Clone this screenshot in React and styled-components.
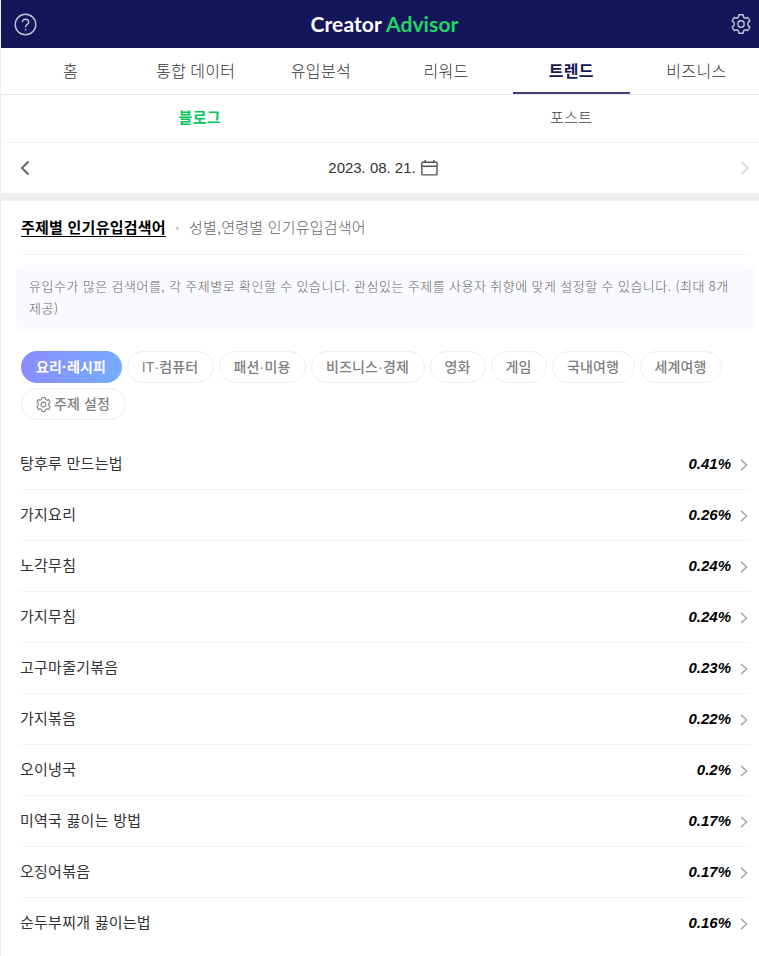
import React, { useState } from 'react';
import styled, { createGlobalStyle, css } from 'styled-components';

const GlobalStyle = createGlobalStyle`
  * {
    box-sizing: border-box;
  }
  body {
    margin: 0;
    background-color: #fff;
    font-family: 'Liberation Sans', 'Noto Sans CJK KR', sans-serif;
    color: #333;
  }
  button {
    padding: 0;
    border: 0;
    background: none;
    font: inherit;
    color: inherit;
    cursor: pointer;
  }
  svg {
    display: block;
    flex-shrink: 0;
  }
`;

const Page = styled.div`
  height: 956px;
  border-left: 1px solid #eee;
  overflow: hidden;
`;

const Header = styled.header`
  display: flex;
  justify-content: space-between;
  align-items: center;
  height: 48px;
  padding: 0 8px 0 13px;
  background-color: #15155b;
  color: #c4c4d6;
`;

const Logo = styled.h1`
  display: flex;
  gap: 4px;
  margin: 0 0 1px 1px;
  font-family: Lato, sans-serif;
  font-size: 21px;
  font-weight: 700;
  line-height: 24px;
  letter-spacing: 0.1px;
  color: #fff;
`;

const LogoAccent = styled.span`
  color: #20d665;
`;

const MainTabs = styled.nav`
  display: grid;
  grid-template-columns: repeat(6, 1fr);
  height: 47px;
  padding-left: 7px;
  border-bottom: 1px solid #e6e6e6;
  font-family: 'Noto Sans CJK KR', sans-serif;
`;

const MainTab = styled.button`
  margin: 0 4px;
  border-bottom: 2px solid transparent;
  font-size: 16px;
  font-weight: 300;
  line-height: 42px;
  letter-spacing: 0.35px;
  ${({ $active }) =>
    $active &&
    css`
      border-color: #42427c;
      font-weight: 700;
      color: #15155b;
    `}
`;

const SubTabs = styled.nav`
  display: grid;
  grid-template-columns: 1fr 1fr;
  height: 48px;
  padding: 0 2px 0 13px;
  border-bottom: 1px solid #f4f4f4;
`;

const SubTab = styled.button`
  padding-bottom: 2px;
  font-size: 15px;
  font-weight: ${({ $active }) => ($active ? 700 : 300)};
  line-height: 44px;
  letter-spacing: 0.4px;
  color: ${({ $active }) => ($active ? '#03c75a' : '#444')};
`;

const DateBar = styled.div`
  display: flex;
  justify-content: space-between;
  align-items: center;
  height: 50px;
  padding: 0 9px 0 19px;
`;

const DateLabel = styled.button`
  display: flex;
  align-items: center;
  gap: 5px;
  margin-left: -4px;
  font-size: 15px;
  line-height: 20px;
  letter-spacing: -0.02px;
`;

const Divider = styled.div`
  height: 8px;
  background-color: #eee;
`;

const SectionTabs = styled.div`
  display: flex;
  align-items: center;
  height: 54px;
  margin: 0 9px 0 20px;
  border-bottom: 1px solid #f4f4f4;
`;

const SectionTab = styled.button`
  height: 17px;
  margin-top: 1px;
  border-bottom: 1px solid ${({ $active }) => ($active ? '#000' : 'transparent')};
  font-size: 15px;
  font-weight: ${({ $active }) => ($active ? 700 : 300)};
  line-height: 16px;
  letter-spacing: ${({ $active }) => ($active ? 0.25 : 0.2)}px;
  color: ${({ $active }) => ($active ? '#000' : '#666')};
`;

const Dot = styled.span`
  width: 3px;
  height: 3px;
  margin: 1px 10px 0;
  background-color: #d2d2d2;
`;

const Notice = styled.p`
  height: 66px;
  margin: 10px 5px 0 15px;
  padding: 10px 13px;
  border-radius: 6px;
  background-color: #f9faff;
  font-family: 'Noto Sans CJK KR', sans-serif;
  font-size: 13px;
  font-weight: 300;
  line-height: 22px;
  letter-spacing: 0.5px;
  word-spacing: 0.5px;
  color: #666;
`;

const Chips = styled.div`
  display: flex;
  flex-wrap: wrap;
  gap: 5px;
  padding: 20px 20px 0;
`;

const Chip = styled.button`
  display: flex;
  justify-content: center;
  align-items: center;
  gap: 3px;
  width: ${({ $width }) => $width}px;
  height: 32px;
  padding-right: 1px;
  border: 1px solid #eee;
  border-radius: 16px;
  font-size: 14px;
  font-weight: 500;
  line-height: 20px;
  letter-spacing: 0.15px;
  white-space: nowrap;
  color: #808080;
  ${({ $active }) =>
    $active &&
    css`
      border: 0;
      background-image: linear-gradient(105deg, #8b8bff, #75adff);
      font-weight: 700;
      color: #fff;
    `}
`;

const KeywordList = styled.ul`
  margin: 19px 9px 0 19px;
  padding: 0;
  list-style: none;
`;

const KeywordRow = styled.li`
  display: flex;
  align-items: center;
  height: 51px;
  border-bottom: 1px solid #f4f4f4;

  &:last-child {
    border-bottom-color: transparent;
  }
`;

const Keyword = styled.span`
  flex: 1;
  font-size: 15px;
  font-weight: 400;
  line-height: 20px;
  letter-spacing: 0.25px;
`;

const Ratio = styled.em`
  margin-right: 9px;
  font-size: 15px;
  font-weight: 700;
  line-height: 20px;
  color: #000;
`;

const HelpIcon = () => (
  <svg width="23" height="23" viewBox="0 0 23 23" fill="none" stroke="currentColor" strokeWidth="1.4">
    <circle cx="11.5" cy="11.5" r="10.3" />
    <path d="M8.4 9.3C8.4 7.4 9.7 6.3 11.5 6.3s3.2 1.1 3.2 2.8c0 2.2-3.1 2.4-3.1 4.8v.4" />
    <path d="M11.6 15.8v1.5" />
  </svg>
);

const GearIcon = ({ size = 20 }) => (
  <svg
    width={size}
    height={size}
    viewBox="0 0 20 20"
    fill="none"
    stroke="currentColor"
    strokeWidth="1.4"
    strokeLinejoin="round"
  >
    <path d="M8 .8h4l.7 2.5 1.5.9 2.6-.7 2 3.4-1.9 1.9v2.4l1.9 1.9-2 3.4-2.6-.7-1.5.9-.7 2.5H8l-.7-2.5-1.5-.9-2.6.7-2-3.4 1.9-1.9V8.8L1.2 6.9l2-3.4 2.6.7 1.5-.9z" />
    <circle cx="10" cy="10" r="3.2" />
  </svg>
);

const CalendarIcon = () => (
  <svg width="17" height="16" viewBox="0 0 17 16" fill="none" stroke="#555" strokeWidth="1.4">
    <rect x=".8" y="2.3" width="15.2" height="12.6" rx="1" />
    <path d="M.8 6.3H16M4.2 0v2.5M12.8 0v2.5" />
  </svg>
);

const PrevIcon = () => (
  <svg width="10" height="16" viewBox="0 0 10 16" fill="none" stroke="#666" strokeWidth="2">
    <path d="M8.5 1.5 2 8l6.5 6.5" />
  </svg>
);

const NextIcon = () => (
  <svg width="10" height="16" viewBox="0 0 10 16" fill="none" stroke="#ddd" strokeWidth="1.8">
    <path d="M1.5 1.5 8 8l-6.5 6.5" />
  </svg>
);

const RowArrow = styled.svg`
  width: 8px;
  height: 12px;
  margin: 2px 2px 0 0;
`;

const mainTabs = ['홈', '통합 데이터', '유입분석', '리워드', '트렌드', '비즈니스'];
const subTabs = ['블로그', '포스트'];
const sectionTabs = ['주제별 인기유입검색어', '성별,연령별 인기유입검색어'];

const topics = [
  { name: '요리·레시피', width: 101 },
  { name: 'IT·컴퓨터', width: 87 },
  { name: '패션·미용', width: 87 },
  { name: '비즈니스·경제', width: 114 },
  { name: '영화', width: 56 },
  { name: '게임', width: 56 },
  { name: '국내여행', width: 83 },
  { name: '세계여행', width: 82 },
];

const keywords = [
  { name: '탕후루 만드는법', ratio: '0.41%' },
  { name: '가지요리', ratio: '0.26%' },
  { name: '노각무침', ratio: '0.24%' },
  { name: '가지무침', ratio: '0.24%' },
  { name: '고구마줄기볶음', ratio: '0.23%' },
  { name: '가지볶음', ratio: '0.22%' },
  { name: '오이냉국', ratio: '0.2%' },
  { name: '미역국 끓이는 방법', ratio: '0.17%' },
  { name: '오징어볶음', ratio: '0.17%' },
  { name: '순두부찌개 끓이는법', ratio: '0.16%' },
];

const App = () => {
  const [mainTab, setMainTab] = useState('트렌드');
  const [subTab, setSubTab] = useState('블로그');
  const [sectionTab, setSectionTab] = useState(sectionTabs[0]);
  const [topic, setTopic] = useState('요리·레시피');

  return (
    <>
      <GlobalStyle />
      <Page>
        <Header>
          <HelpIcon />
          <Logo>
            Creator<LogoAccent>Advisor</LogoAccent>
          </Logo>
          <GearIcon />
        </Header>

        <MainTabs>
          {mainTabs.map((name) => (
            <MainTab key={name} $active={name === mainTab} onClick={() => setMainTab(name)}>
              {name}
            </MainTab>
          ))}
        </MainTabs>

        <SubTabs>
          {subTabs.map((name) => (
            <SubTab key={name} $active={name === subTab} onClick={() => setSubTab(name)}>
              {name}
            </SubTab>
          ))}
        </SubTabs>

        <DateBar>
          <PrevIcon />
          <DateLabel>
            2023. 08. 21.
            <CalendarIcon />
          </DateLabel>
          <NextIcon />
        </DateBar>

        <Divider />

        <SectionTabs>
          {sectionTabs.map((name, index) => (
            <React.Fragment key={name}>
              {index > 0 && <Dot />}
              <SectionTab $active={name === sectionTab} onClick={() => setSectionTab(name)}>
                {name}
              </SectionTab>
            </React.Fragment>
          ))}
        </SectionTabs>

        <Notice>
          유입수가 많은 검색어를, 각 주제별로 확인할 수 있습니다. 관심있는 주제를 사용자 취향에 맞게 설정할 수
          있습니다. (최대 8개 제공)
        </Notice>

        <Chips>
          {topics.map(({ name, width }) => (
            <Chip key={name} $width={width} $active={name === topic} onClick={() => setTopic(name)}>
              {name}
            </Chip>
          ))}
          <Chip $width={105}>
            <GearIcon size={15} />
            주제 설정
          </Chip>
        </Chips>

        <KeywordList>
          {keywords.map(({ name, ratio }) => (
            <KeywordRow key={name}>
              <Keyword>{name}</Keyword>
              <Ratio>{ratio}</Ratio>
              <RowArrow viewBox="0 0 8 12" fill="none" stroke="#aaa" strokeWidth="1.6">
                <path d="M1 .8 6.5 6 1 11.2" />
              </RowArrow>
            </KeywordRow>
          ))}
        </KeywordList>
      </Page>
    </>
  );
};

export default App;
